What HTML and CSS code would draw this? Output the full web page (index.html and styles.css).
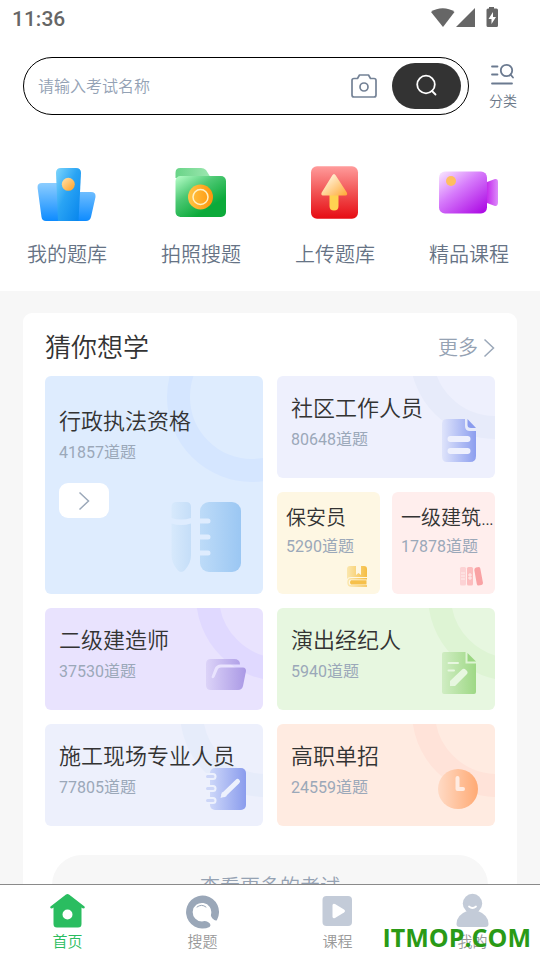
FILE: index.html
```html
<!DOCTYPE html>
<html lang="zh-CN">
<head>
<meta charset="UTF-8">
<meta name="viewport" content="width=device-width, initial-scale=1.0">
<title>首页</title>
<link rel="stylesheet" href="styles.css">
</head>
<body>
<div class="status-bar">
    <span class="time">11:36</span>
    <svg class="status-icons" width="70" height="24" viewBox="0 0 70 24" fill="#666">
        <path d="M1 7C7.500 2 18 2 24.500 7L13 22Z"/>
        <path d="M45 3V22H26Z"/>
        <path fill-rule="evenodd" d="M59 3.500V2h5v1.500h2.500q1.500 0 1.500 1.500V20.500q0 1.500-1.500 1.500H58q-1.500 0-1.500-1.500V5q0-1.500 1.500-1.500ZM63 7l-4.500 7H61.500v5L66 12H63Z"/>
    </svg>
</div>

<form class="search-row">
    <div class="search-box">
        <input type="text" class="search-input" placeholder="请输入考试名称" aria-label="考试名称">
        <button type="button" class="camera-btn" aria-label="拍照">
            <svg width="26" height="26" viewBox="0 0 26 26" fill="none" stroke="#748296" stroke-width="1.700" stroke-linejoin="round">
                <path d="M3 5.500H6.500L8.500 2H17.500L19.500 5.500H23Q25 5.500 25 7.500V22Q25 24 23 24H3Q1 24 1 22V7.500Q1 5.500 3 5.500Z"/>
                <circle cx="13" cy="14" r="4"/>
            </svg>
        </button>
        <button type="submit" class="search-btn" aria-label="搜索">
            <svg width="24" height="24" viewBox="0 0 24 24" fill="none" stroke="#fff" stroke-width="1.800" stroke-linecap="round">
                <circle cx="11" cy="10.500" r="8.800"/>
                <path d="M17 17L20.500 20.500"/>
            </svg>
        </button>
    </div>
    <a href="#" class="category">
        <svg width="26" height="24" viewBox="0 0 26 24" fill="none" stroke="#6b7a90" stroke-width="1.800" stroke-linecap="round">
            <path d="M2 4.500H7.500M2 12.500H7.500M2 21.500H22"/>
            <circle cx="16.500" cy="8.500" r="5.700"/>
            <path d="M20.500 12.500L23 15.500"/>
        </svg>
        <span>分类</span>
    </a>
</form>

<nav class="quick">
    <a href="#" class="quick-item">
        <svg width="60" height="60" viewBox="0 0 60 60">
            <defs>
                <linearGradient id="blueBack" x1="0" y1="0" x2="0" y2="1"><stop offset="0" stop-color="#8ccdff"/><stop offset="1" stop-color="#0d8bff"/></linearGradient>
                <linearGradient id="blueFront" x1="0" y1="0" x2="1" y2="1"><stop offset="0" stop-color="#7fd6fb"/><stop offset=".45" stop-color="#2aa4f4"/><stop offset="1" stop-color="#0583ec"/></linearGradient>
                <linearGradient id="orangeDot" x1="0" y1="0" x2="1" y2="1"><stop offset="0" stop-color="#ffe3ae"/><stop offset="1" stop-color="#ff9f22"/></linearGradient>
            </defs>
            <path fill="url(#blueBack)" d="M5 19H30V28H54Q59 28 58.500 33L54 53Q53 57 49 57H9Q5 57 4.500 53L.6 24Q0 19 5 19Z"/>
            <path fill="url(#blueFront)" d="M24 4H39Q44 4 44 9L41.500 57H21L19 9Q19 4 24 4Z"/>
            <circle cx="31.300" cy="20.300" r="6.500" fill="url(#orangeDot)"/>
        </svg>
        <span>我的题库</span>
    </a>
    <a href="#" class="quick-item">
        <svg width="60" height="60" viewBox="0 0 60 60">
            <defs>
                <linearGradient id="greenBack" x1="0" y1="0" x2="1" y2="0"><stop offset="0" stop-color="#68d487"/><stop offset="1" stop-color="#9ee7b1"/></linearGradient>
                <linearGradient id="greenFront" x1="0" y1="0" x2=".8" y2="1"><stop offset="0" stop-color="#b9ffca"/><stop offset=".4" stop-color="#4cc873"/><stop offset=".8" stop-color="#0caa3a"/></linearGradient>
                <linearGradient id="orangeCoin" x1="0" y1="0" x2="1" y2="0"><stop offset="0" stop-color="#ffc545"/><stop offset="1" stop-color="#ff950c"/></linearGradient>
            </defs>
            <path fill="url(#greenBack)" d="M9 4H30Q33 4 35 6L40 14H4.500V9Q4.500 4 9 4Z"/>
            <rect x="4.500" y="12" width="50.500" height="41" rx="5" fill="url(#greenFront)"/>
            <circle cx="29.500" cy="33" r="12.500" fill="url(#orangeCoin)"/>
            <circle cx="29.500" cy="33" r="7.500" fill="none" stroke="#fff2c5" stroke-width="1.500"/>
        </svg>
        <span>拍照搜题</span>
    </a>
    <a href="#" class="quick-item">
        <svg width="60" height="60" viewBox="0 0 60 60">
            <defs>
                <linearGradient id="redBox" x1="0" y1="0" x2="0" y2="1"><stop offset="0" stop-color="#ff9b9b"/><stop offset=".5" stop-color="#f15353"/><stop offset="1" stop-color="#e60b13"/></linearGradient>
                <linearGradient id="arrowHead" x1="0" y1="0" x2="1" y2="1"><stop offset=".2" stop-color="#fff1d6"/><stop offset="1" stop-color="#ffa833"/></linearGradient>
            </defs>
            <rect x="6" y="2.300" width="47" height="52.500" rx="6" fill="url(#redBox)"/>
            <path fill="#ffd251" d="M24.500 28H33.500V42Q33.500 46.500 29 46.500Q24.500 46.500 24.500 42Z"/>
            <path fill="url(#arrowHead)" d="M27.200 11.500Q29 8.500 30.800 11.500L41.800 28.500Q43 31 40.500 31.500H18Q15.500 31 16.700 28.500Z"/>
        </svg>
        <span>上传题库</span>
    </a>
    <a href="#" class="quick-item">
        <svg width="60" height="60" viewBox="0 0 60 60">
            <defs>
                <linearGradient id="purpleBox" x1="0" y1="0" x2=".85" y2="1"><stop offset="0" stop-color="#faeaff"/><stop offset=".45" stop-color="#d67bfb"/><stop offset="1" stop-color="#ae0fe5"/></linearGradient>
                <linearGradient id="purpleLens" x1="0" y1="0" x2="1" y2="0"><stop offset="0" stop-color="#c42bec"/><stop offset="1" stop-color="#dc8cfa"/></linearGradient>
            </defs>
            <path fill="url(#purpleLens)" d="M48 18L56 15Q59 14.500 59 18V38Q59 42.500 56 42L48 39Z"/>
            <rect x="0" y="7.500" width="48" height="42" rx="6" fill="url(#purpleBox)"/>
            <circle cx="12" cy="17" r="5" fill="#ffbe60"/>
        </svg>
        <span>精品课程</span>
    </a>
</nav>

<main class="main">
    <section class="panel">
        <div class="panel-head">
            <h2>猜你想学</h2>
            <a href="#" class="more">更多
                <svg width="12" height="20" viewBox="0 0 12 20" fill="none" stroke="#9ba8b9" stroke-width="1.500"><path d="M1.500 1.500L10.500 10L1.500 18.500"/></svg>
            </a>
        </div>

        <div class="grid">
            <article class="card card-blue ring-low">
                <h3>行政执法资格</h3>
                <p>41857道题</p>
                <button type="button" class="go-btn" aria-label="进入">
                    <svg width="12" height="20" viewBox="0 0 12 20" fill="none" stroke="#9ba8b9" stroke-width="1.500"><path d="M1.500 1.500L10.500 10L1.500 18.500"/></svg>
                </button>
                <svg class="card-icon" width="72" height="72" viewBox="0 0 72 72">
                    <defs>
                        <linearGradient id="penFill"><stop offset="0" stop-color="#d7e9fc"/><stop offset="1" stop-color="#c5def8"/></linearGradient>
                        <linearGradient id="bookFill"><stop offset="0" stop-color="#bddbf8"/><stop offset="1" stop-color="#9bc7f3"/></linearGradient>
                    </defs>
                    <path fill="url(#penFill)" d="M6.500 1H16Q21 1 21 6V17Q11 20 1.500 17V6Q1.500 1 6.500 1ZM1.500 22.500Q11 25.500 21 22.500V54Q21 62 15 69Q11 73 7.500 69Q1.500 62 1.500 54Z"/>
                    <rect x="30" y="1" width="41" height="70" rx="9" fill="url(#bookFill)"/>
                    <path stroke="#deecfe" stroke-width="5" stroke-linecap="round" d="M28 20H38M28 36H38M28 52H38"/>
                </svg>
            </article>

            <article class="card card-indigo ring-high">
                <h3>社区工作人员</h3>
                <p>80648道题</p>
                <svg class="card-icon" width="36" height="44" viewBox="0 0 36 44">
                    <defs><linearGradient id="docFill"><stop offset="0" stop-color="#dfe4fb"/><stop offset="1" stop-color="#8c9eef"/></linearGradient></defs>
                    <path fill="url(#docFill)" d="M6 0H24V7Q24 12 29 12H35V37Q35 43 29 43H6Q1 43 1 37V5Q1 0 6 0Z"/>
                    <path fill="#8a9cee" d="M26.500 0L35 9H30Q26.500 9 26.500 6Z"/>
                    <path stroke="#eef0fd" stroke-width="6" stroke-linecap="round" d="M9.500 20H26.500M9.500 32H26.500"/>
                </svg>
            </article>

            <div class="mini-row">
                <article class="card card-mini card-yellow">
                    <h3>保安员</h3>
                    <p>5290道题</p>
                    <svg class="card-icon" width="22" height="22" viewBox="0 0 22 22">
                        <defs><linearGradient id="yellowFill"><stop offset="0" stop-color="#fbe7ae"/><stop offset="1" stop-color="#f5bd43"/></linearGradient></defs>
                        <path fill="url(#yellowFill)" d="M4 1H10V10L12.500 8L15 10V1H18Q21 1 21 4V12H5Q2 12 1 14V4Q1 1 4 1Z"/>
                        <path fill="none" stroke="url(#yellowFill)" stroke-width="1.500" d="M21 13.800H5Q2 13.800 2 17.500Q2 21 5 21H21"/>
                        <path fill="#f6c04b" d="M5 15.300H20.500V19.500H5Q3 17.500 5 15.300Z"/>
                    </svg>
                </article>
                <article class="card card-mini card-red">
                    <h3>一级建筑师</h3>
                    <p>17878道题</p>
                    <svg class="card-icon" width="24" height="22" viewBox="0 0 24 22">
                        <rect x="1" y="2" width="6" height="18.500" rx="1.500" fill="#fcd2d4"/>
                        <rect x="8" y="2" width="6" height="18.500" rx="1.500" fill="#fcbdbe"/>
                        <path fill="#f9a2a4" d="M17 2.500L20 2Q21 2 21.300 3.500L24 18Q24 19.500 22.500 20L19.500 20.500Q18 20.500 17.800 19L15.300 5Q15.300 3 17 2.500Z"/>
                        <path stroke="#ffeeed" stroke-width="1" d="M2 8H6M2 11H6M2 14H6M9 10H13M9 13H13M11 8V15"/>
                    </svg>
                </article>
            </div>

            <article class="card card-purple ring-mid">
                <h3>二级建造师</h3>
                <p>37530道题</p>
                <svg class="card-icon" width="40" height="32" viewBox="0 0 40 32">
                    <defs><linearGradient id="folderFill"><stop offset="0" stop-color="#dcd3f8"/><stop offset="1" stop-color="#aa99e5"/></linearGradient></defs>
                    <path fill="url(#folderFill)" d="M5 0H28Q34 0 34 5.500H15Q10 5.500 8.500 10L5.500 18Q6.500 20.500 8.500 18L12 10Q12.500 8.500 15 8.500H37Q40 8.500 40 12L37 27Q36 31 32 31H5Q0 31 0 26V5Q0 0 5 0Z"/>
                </svg>
            </article>

            <article class="card card-green ring-mid">
                <h3>演出经纪人</h3>
                <p>5940道题</p>
                <svg class="card-icon" width="36" height="44" viewBox="0 0 36 44">
                    <defs><linearGradient id="greenDoc"><stop offset="0" stop-color="#d0edc3"/><stop offset="1" stop-color="#9ed885"/></linearGradient></defs>
                    <path fill="url(#greenDoc)" d="M3 1H24.500V12.500H35V41Q35 43 33 43H3Q1 43 1 41V3Q1 1 3 1Z"/>
                    <path fill="#9bd682" d="M26.500 2L35 10.500H26.500Z"/>
                    <path fill="none" stroke="#e7f7e0" stroke-width="2" stroke-linecap="round" d="M7.500 12H17M7.500 19.500H13"/>
                    <path fill="#e7f7e0" d="M21 18.500Q23 17 25 19Q27.500 21 26 23L14 35H9V30Z"/>
                </svg>
            </article>

            <article class="card card-sky ring-right">
                <h3>施工现场专业人员</h3>
                <p>77805道题</p>
                <svg class="card-icon" width="40" height="44" viewBox="0 0 40 44">
                    <defs><linearGradient id="noteFill"><stop offset="0" stop-color="#cdd7f9"/><stop offset="1" stop-color="#8a9ced"/></linearGradient></defs>
                    <rect x="4" y="1" width="36" height="42" rx="5" fill="url(#noteFill)"/>
                    <path fill="none" stroke="#edf1fd" stroke-width="7" stroke-linecap="round" d="M0 9.500H7M0 21.500H7M0 33.500H7"/>
                    <path fill="none" stroke="#cdd6f8" stroke-width="3" stroke-linecap="round" d="M1.500 9.500H7M1.500 21.500H7M1.500 33.500H7"/>
                    <path stroke="#edf1fd" stroke-width="5" stroke-linecap="round" d="M18 27.500L31.500 14.500"/>
                    <path fill="#edf1fd" d="M16 25L14.500 31L21 29Z"/>
                </svg>
            </article>

            <article class="card card-orange ring-right">
                <h3>高职单招</h3>
                <p>24559道题</p>
                <svg class="card-icon" width="40" height="44" viewBox="0 0 40 44">
                    <defs><linearGradient id="clockFill"><stop offset="0" stop-color="#ffdac5"/><stop offset="1" stop-color="#ffaa74"/></linearGradient></defs>
                    <circle cx="20" cy="22" r="20" fill="url(#clockFill)"/>
                    <path fill="none" stroke="#ffebe1" stroke-width="4" stroke-linecap="round" stroke-linejoin="round" d="M19.500 11V22H25"/>
                </svg>
            </article>
        </div>

        <button type="button" class="view-more">查看更多的考试</button>
    </section>
</main>

<nav class="tab-bar">
    <a href="#" class="tab active">
        <svg width="36" height="36" viewBox="0 0 36 36">
            <path fill="#2abd60" fill-rule="evenodd" d="M16 1.500Q17.500 .5 19 1.500L34.500 13.500Q35.500 15.500 33 15.500L31.500 14.500V31Q31.500 34.500 28 34.500H7Q3.500 34.500 3.500 31V14.500L2 15.500Q-.5 15.500 .5 13.500ZM17.500 16.500A5 5 0 1 0 17.500 26.500A5 5 0 1 0 17.500 16.500Z"/>
        </svg>
        <span>首页</span>
    </a>
    <a href="#" class="tab">
        <svg width="36" height="36" viewBox="0 0 36 36">
            <path fill="#9aa7b8" d="M32 27A16.500 16.500 0 1 0 24.500 34Q27 31.500 23 29Q20 27.500 17 28.500A9.300 9.300 0 1 1 26 21.500Q25.500 23.500 27.500 25.500Q30.500 28.500 32 27Z"/>
            <path fill="none" stroke="#9aa7b8" stroke-width="1" stroke-linecap="round" d="M12 14Q16.500 10.500 21 14"/>
        </svg>
        <span>搜题</span>
    </a>
    <a href="#" class="tab">
        <svg width="36" height="36" viewBox="0 0 36 36">
            <rect x="2.500" y="3" width="29.500" height="30" rx="4" fill="#c3cbd8"/>
            <path fill="#fff" d="M12.500 12.500Q12.500 10 15 11L24 16.500Q26 18 24 19.500L15 25Q12.500 26 12.500 23.500Z"/>
        </svg>
        <span>课程</span>
    </a>
    <a href="#" class="tab">
        <svg width="36" height="36" viewBox="0 0 36 36">
            <circle cx="17.500" cy="10.500" r="9.700" fill="#c3cbd8"/>
            <path fill="#c3cbd8" d="M12 18H23Q33.500 22 33.500 31Q33.500 34 30.500 34H4.500Q1.500 34 1.500 31Q1.500 22 12 18Z"/>
            <path fill="none" stroke="#fff" stroke-width="1.800" stroke-linecap="round" d="M14 13.500Q17.500 16.500 21 13.500"/>
        </svg>
        <span>我的</span>
    </a>
    <span class="watermark">ITMOP.COM</span>
</nav>
</body>
</html>
```
FILE: styles.css
```css
*, *::before {
    box-sizing: border-box;
}
body {
    margin: 0;
    height: 100vh;
    display: flex;
    flex-direction: column;
    background-color: #fff;
    color: #333;
    font-family: Roboto, "Noto Sans CJK SC", sans-serif;
    font-weight: 350;
}
h2, h3, p {
    margin: 0;
    font-weight: inherit;
}
a {
    color: inherit;
    text-decoration: none;
}
button, input {
    border: none;
    padding: 0;
    font-family: inherit;
    font-weight: inherit;
}
button {
    cursor: pointer;
}
svg {
    display: block;
    flex-shrink: 0;
}

/* status bar */
.status-bar {
    display: flex;
    justify-content: space-between;
    align-items: center;
    height: 37px;
    padding: 0 40px 0 12px;
    flex-shrink: 0;
}
.time {
    color: #666;
    font-size: 21px;
    font-weight: 500;
}
.status-icons {
    margin-bottom: 4px;
}

/* search */
.search-row {
    display: flex;
    align-items: center;
    gap: 20px;
    padding: 20px 23px 0;
    flex-shrink: 0;
}
.search-box {
    flex: 1;
    min-width: 0;
    display: flex;
    align-items: center;
    height: 58px;
    padding: 0 7px 0 14px;
    border: 1px solid #000;
    border-radius: 29px;
}
.search-input {
    flex: 1;
    min-width: 0;
    outline: none;
    background: none;
    font-size: 16px;
}
.search-input::placeholder {
    color: #94a2b5;
}
.camera-btn {
    margin-right: 15px;
    background: none;
}
.search-btn {
    display: flex;
    align-items: center;
    justify-content: center;
    width: 69px;
    height: 46px;
    border-radius: 23px;
    background-color: #333;
}
.category {
    display: flex;
    flex-direction: column;
    align-items: center;
    gap: 5px;
    width: 28px;
    color: #6b7889;
    font-size: 14px;
    line-height: 20px;
}

/* shortcuts */
.quick {
    display: flex;
    justify-content: space-between;
    padding: 49px 31px 21px 27px;
    flex-shrink: 0;
}
.quick-item {
    display: flex;
    flex-direction: column;
    align-items: center;
    gap: 16px;
    color: #667385;
    font-size: 20px;
    line-height: 30px;
}

/* recommended */
.main {
    flex: 1;
    min-height: 0;
    overflow-y: auto;
    scrollbar-width: none;
    padding: 22px 23px;
    background-color: #f7f7f7;
}
.panel {
    padding: 15px 22px 22px;
    border-radius: 9px;
    background-color: #fff;
}
.panel-head {
    display: flex;
    justify-content: space-between;
    align-items: center;
    margin-bottom: 8px;
}
.panel-head h2 {
    font-size: 26px;
    line-height: 40px;
}
.more {
    display: flex;
    align-items: center;
    gap: 5px;
    color: #95a2b3;
    font-size: 20px;
    line-height: 28px;
}
.grid {
    display: grid;
    grid-template-columns: 1fr 1fr;
    grid-auto-rows: minmax(102px, auto);
    gap: 14px;
}
.card {
    position: relative;
    overflow: hidden;
    padding: 18px 14px;
    border-radius: 6px;
}
.card h3 {
    position: relative;
    z-index: 1;
    font-size: 22px;
    line-height: 30px;
    white-space: nowrap;
    overflow: hidden;
    text-overflow: ellipsis;
}
.card p {
    position: relative;
    margin-top: 5px;
    color: #9ba8b9;
    font-size: 16px;
    font-weight: 400;
    line-height: 22px;
}
.card-icon {
    position: absolute;
    right: 17px;
    bottom: 15px;
}

/* big circle in the corner of a card */
.card::before {
    position: absolute;
    width: 170px;
    height: 170px;
    border: 23px solid var(--ring);
    border-radius: 50%;
}
.ring-low::before {
    content: "";
    top: -64px;
    right: -74px;
}
.ring-high::before {
    content: "";
    top: -107px;
    right: -85px;
}
.ring-mid::before {
    content: "";
    top: -97px;
    right: -103px;
}
.ring-right::before {
    content: "";
    top: -97px;
    right: -87px;
}

.card-blue {
    --ring: #d5e6ff;
    grid-row: span 2;
    padding-top: 31px;
    background-color: #deecfe;
}
.card-blue .card-icon {
    right: 21px;
    bottom: 21px;
}
.card-indigo {
    --ring: #e7ebfa;
    background-color: #eef0fd;
}
.card-indigo .card-icon,
.card-green .card-icon {
    right: 18px;
}
.card-purple {
    --ring: #e0d9ff;
    background-color: #e9e3fe;
}
.card-purple .card-icon {
    bottom: 19px;
}
.card-green {
    --ring: #def4d4;
    background-color: #e7f7e0;
}
.card-sky {
    --ring: #e6ecfa;
    background-color: #edf0fc;
}
.card-orange {
    --ring: #ffe3d9;
    background-color: #ffebe1;
}
.card-yellow {
    background-color: #fef7e3;
}
.card-red {
    background-color: #ffeeed;
}
.mini-row {
    display: grid;
    grid-template-columns: 1fr 1fr;
    gap: 12px;
}
.card-mini {
    padding: 13px 0 0 9px;
}
.card-mini h3 {
    font-size: 20px;
    line-height: 26px;
}
.card-mini .card-icon {
    right: 12px;
    bottom: 7px;
}
.go-btn {
    display: flex;
    align-items: center;
    justify-content: center;
    width: 50px;
    height: 35px;
    margin-top: 19px;
    border-radius: 9px;
    background-color: #fff;
}
.view-more {
    display: block;
    width: calc(100% - 14px);
    height: 60px;
    margin: 29px auto 0;
    border-radius: 30px;
    background-color: #f7f7f7;
    color: #95a2b3;
    font-size: 20px;
}

/* bottom tabs */
.tab-bar {
    position: relative;
    display: flex;
    height: 76px;
    padding-top: 8px;
    border-top: 1px solid #8a8a8a;
    flex-shrink: 0;
}
.tab {
    flex: 1;
    display: flex;
    flex-direction: column;
    align-items: center;
    gap: 3px;
    color: #999;
    font-size: 15px;
    line-height: 20px;
}
.tab.active {
    color: #2abd60;
}
.watermark {
    position: absolute;
    right: 9px;
    bottom: 6px;
    color: #2a9a16;
    font-family: "Open Sans", sans-serif;
    font-size: 25px;
    font-weight: 700;
    line-height: 34px;
}
```
